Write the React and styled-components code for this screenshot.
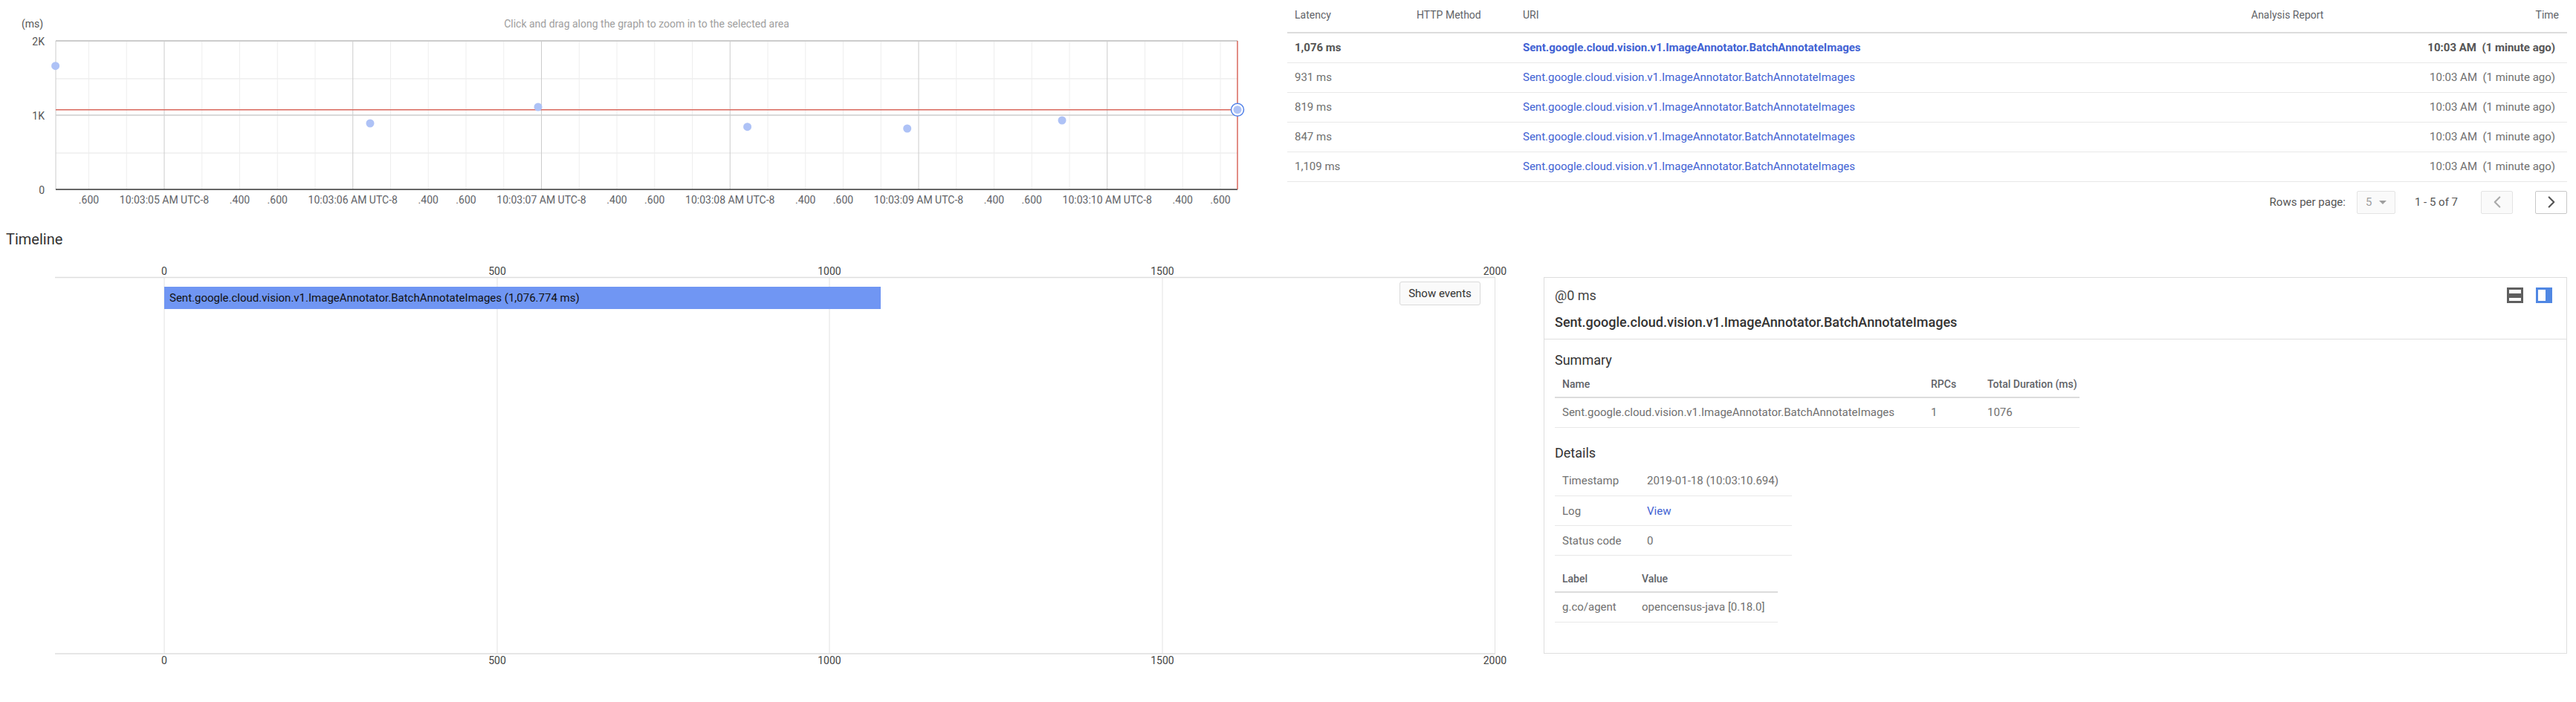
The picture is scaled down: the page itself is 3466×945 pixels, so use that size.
import styled, { createGlobalStyle } from "styled-components";
import { ChevronLeft, ChevronRight } from "lucide-react";

const GlobalStyle = createGlobalStyle`
  html, body {
    margin: 0;
    background: #fff;
    font-family: Roboto, "Liberation Sans", sans-serif;
  }
`;

const Page = styled.div`
  width: 3466px;
  height: 945px;
  overflow: hidden;
  color: #616161;
`;

const TopRow = styled.div`
  display: flex;
  height: 300px;
`;

const ChartPanel = styled.div`
  width: 1732px;
  flex: none;
`;

const ChartHeader = styled.div`
  display: grid;
  grid-template-columns: 75px 1590px;
  height: 48px;
  padding-top: 22px;
  box-sizing: border-box;
  font-size: 14px;
  line-height: 20px;
`;

const AxisUnit = styled.span`
  padding-left: 29px;
  color: #555;
`;

const Hint = styled.span`
  text-align: center;
  color: #9e9e9e;
`;

const TablePanel = styled.div`
  width: 1722px;
  flex: none;
`;

const TraceTable = styled.table`
  width: 100%;
  table-layout: fixed;
  border-collapse: collapse;
  font-size: 15px;
`;

const Th = styled.th`
  height: 44px;
  box-sizing: border-box;
  padding: 0 ${(p) => (p.$last ? "11px" : "10px")} 4px 10px;
  font-size: 14px;
  font-weight: 400;
  color: #5f6368;
  text-align: ${(p) => (p.$right ? "right" : "left")};
  border-bottom: 2px solid #dcdcdc;
`;

const Td = styled.td`
  height: 40px;
  box-sizing: border-box;
  padding: 0 ${(p) => (p.$right ? "16px" : "10px")} 0 10px;
  text-align: ${(p) => (p.$right ? "right" : "left")};
  white-space: pre;
  font-weight: ${(p) => (p.$bold ? 700 : 400)};
  color: ${(p) => (p.$bold ? "#555" : "#707070")};
  border-bottom: 1px solid #e8e8e8;
`;

const UriLink = styled.a`
  color: #3f62d3;
  text-decoration: none;
`;

const Pagination = styled.div`
  display: flex;
  align-items: center;
  justify-content: flex-end;
  margin-top: 12px;
  height: 31px;
  font-size: 15px;
  color: #555;
`;

const RowsSelect = styled.div`
  display: flex;
  align-items: center;
  justify-content: space-between;
  box-sizing: border-box;
  width: 52px;
  height: 31px;
  margin-left: 15px;
  padding: 0 11px;
  background: #fafafa;
  border: 1px solid #e4e4e4;
  border-radius: 2px;
  color: #9e9e9e;
`;

const Caret = styled.span`
  width: 0;
  height: 0;
  border-left: 5px solid transparent;
  border-right: 5px solid transparent;
  border-top: 5px solid #9e9e9e;
`;

const PageCount = styled.span`
  margin-left: 26px;
  margin-right: 31px;
`;

const PageButton = styled.button`
  display: flex;
  align-items: center;
  justify-content: center;
  box-sizing: border-box;
  width: 43px;
  height: 31px;
  margin-left: ${(p) => (p.$next ? "30px" : "0")};
  padding: 0;
  background: ${(p) => (p.$next ? "#fff" : "#fafafa")};
  border: 1px solid ${(p) => (p.$next ? "#c8c8c8" : "#e4e4e4")};
  border-radius: 2px;
  color: ${(p) => (p.$next ? "#555" : "#aaa")};
`;

const TimelineHeading = styled.h2`
  margin: 0;
  height: 73px;
  padding: 10px 0 0 8px;
  box-sizing: border-box;
  font-size: 20px;
  line-height: 24px;
  font-weight: 400;
  color: #333;
`;

const TimelineRow = styled.div`
  display: flex;
`;

const TimelineChart = styled.div`
  position: relative;
  width: 2077px;
  flex: none;
`;

const ShowEvents = styled.button`
  position: absolute;
  left: 1883px;
  top: 6px;
  width: 109px;
  height: 32px;
  padding: 0;
  background: #fafafa;
  border: 1px solid #dadada;
  border-radius: 3px;
  font-family: inherit;
  font-size: 15px;
  color: #333;
`;

const DetailPanel = styled.div`
  box-sizing: border-box;
  width: 1377px;
  height: 507px;
  flex: none;
  border: 1px solid #dedede;
`;

const DetailHeader = styled.div`
  position: relative;
  height: 83px;
  box-sizing: border-box;
  padding: 13px 14px 0;
  border-bottom: 1px solid #dedede;
`;

const Offset = styled.div`
  font-size: 18px;
  line-height: 22px;
  color: #444;
`;

const SpanTitle = styled.div`
  margin-top: 14px;
  font-size: 18px;
  line-height: 22px;
  font-weight: 500;
  color: #333;
`;

const ViewIcons = styled.div`
  position: absolute;
  top: 13px;
  right: 19px;
  display: flex;
  gap: 17px;
`;

const DetailBody = styled.div`
  padding: 17px 14px 0;
`;

const SectionTitle = styled.h3`
  margin: 0;
  font-size: 18px;
  line-height: 22px;
  font-weight: 400;
  color: #333;
`;

const InfoTable = styled.table`
  width: ${(p) => p.$width}px;
  margin-top: ${(p) => p.$top}px;
  table-layout: fixed;
  border-collapse: collapse;
  font-size: 15px;
`;

const InfoTh = styled.th`
  height: ${(p) => p.$height || 35}px;
  box-sizing: border-box;
  padding: 0 0 0 10px;
  text-align: left;
  font-size: 14px;
  font-weight: 500;
  color: #5f6368;
  border-bottom: 2px solid #dcdcdc;
`;

const InfoTd = styled.td`
  height: 40px;
  box-sizing: border-box;
  padding: 0 0 0 10px;
  white-space: nowrap;
  color: #707070;
  border-bottom: 1px solid #e8e8e8;
`;

const rows = [
  { latency: "1,076 ms", bold: true },
  { latency: "931 ms" },
  { latency: "819 ms" },
  { latency: "847 ms" },
  { latency: "1,109 ms" },
];

const URI = "Sent.google.cloud.vision.v1.ImageAnnotator.BatchAnnotateImages";

// latency chart ticks, in page coordinates
const STEP = 50.75;
const FIRST_TICK = 221 - 2 * STEP;
const tickLabels = [".600", null, "10:03:05 AM UTC-8", null, ".400", ".600", null, "10:03:06 AM UTC-8", null, ".400", ".600", null, "10:03:07 AM UTC-8", null, ".400", ".600", null, "10:03:08 AM UTC-8", null, ".400", ".600", null, "10:03:09 AM UTC-8", null, ".400", ".600", null, "10:03:10 AM UTC-8", null, ".400", ".600"];
const points = [
  [74.6, 88.7],
  [498, 166],
  [724, 144],
  [1005.6, 170.7],
  [1220.7, 173],
  [1429, 162],
];

const LatencyChart = () => (
  <svg width="1732" height="252" viewBox="0 48 1732 252" style={{ display: "block" }}>
    <g stroke="#eeeeee" strokeWidth="1.5">
      <line x1="75" x2="1665" y1="106" y2="106" />
      <line x1="75" x2="1665" y1="206" y2="206" />
    </g>
    {tickLabels.map((label, i) => {
      const x = FIRST_TICK + i * STEP;
      const major = label && label.startsWith("10");
      return (
        <g key={i}>
          <line x1={x} x2={x} y1="55" y2="255" stroke={major ? "#cccccc" : "#eeeeee"} strokeWidth="1" />
          {label && (
            <text x={x} y="274" textAnchor="middle" fontSize="14" fill="#5f6368" fontFamily="Roboto, sans-serif">
              {label}
            </text>
          )}
        </g>
      );
    })}
    <line x1="75" x2="1665" y1="55" y2="55" stroke="#cccccc" strokeWidth="2" />
    <line x1="75" x2="1665" y1="155" y2="155" stroke="#cccccc" strokeWidth="1.5" />
    <line x1="75" x2="75" y1="55" y2="255" stroke="#cccccc" strokeWidth="1" />
    <line x1="75" x2="1665" y1="255" y2="255" stroke="#333333" strokeWidth="1.5" />
    <line x1="75" x2="1665" y1="147.7" y2="147.7" stroke="#d9675c" strokeWidth="1.5" />
    <line x1="1665" x2="1665" y1="55" y2="255" stroke="#d9675c" strokeWidth="1.5" />
    {[["2K", 61], ["1K", 161], ["0", 261]].map(([label, y]) => (
      <text key={label} x="60" y={y} textAnchor="end" fontSize="14" fill="#555" fontFamily="Roboto, sans-serif">
        {label}
      </text>
    ))}
    {points.map(([x, y]) => (
      <circle key={x} cx={x} cy={y} r="5.5" fill="#aec2f6" />
    ))}
    <circle cx="1665" cy="147.7" r="8.5" fill="#fff" stroke="#4f7fe8" strokeWidth="1.5" />
    <circle cx="1665" cy="147.7" r="5.5" fill="#aec2f6" />
  </svg>
);

const timelineTicks = [
  [221, "0"],
  [669, "500"],
  [1116, "1000"],
  [1564, "1500"],
  [2011.5, "2000"],
];

const SpanTimeline = () => (
  <svg width="2077" height="534" viewBox="0 373 2077 534" overflow="visible" style={{ display: "block" }}>
    {timelineTicks.map(([x, label]) => (
      <g key={label}>
        <line x1={x} x2={x} y1="373" y2="880" stroke="#e2e2e2" strokeWidth="1" />
        <text x={x} y="371" dy="-1" textAnchor="middle" fontSize="14" fill="#444" fontFamily="Roboto, sans-serif">
          {label}
        </text>
        <text x={x} y="894" textAnchor="middle" fontSize="14" fill="#444" fontFamily="Roboto, sans-serif">
          {label}
        </text>
      </g>
    ))}
    <line x1="74" x2="2012" y1="373.5" y2="373.5" stroke="#dedede" strokeWidth="1.5" />
    <line x1="74" x2="2012" y1="880" y2="880" stroke="#dedede" strokeWidth="1.5" />
    <rect x="221" y="386" width="964" height="30" fill="#7096f3" />
    <text x="228" y="406" fontSize="15" fill="#111" fontFamily="Roboto, sans-serif">
      {URI} (1,076.774 ms)
    </text>
  </svg>
);

const StackedViewIcon = () => (
  <svg width="22" height="21" viewBox="0 0 22 21">
    <path fill="#5f5f5f" fillRule="evenodd" d="M0 0h22v21H0zM3 3v5h16V3zM3 14v4h16v-4z" />
  </svg>
);

const SplitViewIcon = () => (
  <svg width="22" height="21" viewBox="0 0 22 21">
    <path fill="#5087e3" fillRule="evenodd" d="M0 0h22v21H0zM3 3v15h10V3z" />
  </svg>
);

export default function App() {
  return (
    <Page>
      <GlobalStyle />
      <TopRow>
        <ChartPanel>
          <ChartHeader>
            <AxisUnit>(ms)</AxisUnit>
            <Hint>Click and drag along the graph to zoom in to the selected area</Hint>
          </ChartHeader>
          <LatencyChart />
        </ChartPanel>
        <TablePanel>
          <TraceTable>
            <colgroup>
              <col style={{ width: 164 }} />
              <col style={{ width: 143 }} />
              <col />
              <col style={{ width: 200 }} />
              <col style={{ width: 235 }} />
            </colgroup>
            <thead>
              <tr>
                <Th>Latency</Th>
                <Th>HTTP Method</Th>
                <Th>URI</Th>
                <Th>Analysis Report</Th>
                <Th $right $last>Time</Th>
              </tr>
            </thead>
            <tbody>
              {rows.map((row) => (
                <tr key={row.latency}>
                  <Td $bold={row.bold}>{row.latency}</Td>
                  <Td />
                  <Td $bold={row.bold}>
                    <UriLink href="#">{URI}</UriLink>
                  </Td>
                  <Td />
                  <Td $right $bold={row.bold}>{"10:03 AM  (1 minute ago)"}</Td>
                </tr>
              ))}
            </tbody>
          </TraceTable>
          <Pagination>
            <span>Rows per page:</span>
            <RowsSelect>
              5
              <Caret />
            </RowsSelect>
            <PageCount>1 - 5 of 7</PageCount>
            <PageButton>
              <ChevronLeft size={26} strokeWidth={2} />
            </PageButton>
            <PageButton $next>
              <ChevronRight size={26} strokeWidth={2} />
            </PageButton>
          </Pagination>
        </TablePanel>
      </TopRow>
      <TimelineHeading>Timeline</TimelineHeading>
      <TimelineRow>
        <TimelineChart>
          <SpanTimeline />
          <ShowEvents>Show events</ShowEvents>
        </TimelineChart>
        <DetailPanel>
          <DetailHeader>
            <Offset>@0 ms</Offset>
            <SpanTitle>{URI}</SpanTitle>
            <ViewIcons>
              <StackedViewIcon />
              <SplitViewIcon />
            </ViewIcons>
          </DetailHeader>
          <DetailBody>
            <SectionTitle>Summary</SectionTitle>
            <InfoTable $width={706} $top={4}>
              <colgroup>
                <col style={{ width: 496 }} />
                <col style={{ width: 76 }} />
                <col />
              </colgroup>
              <thead>
                <tr>
                  <InfoTh>Name</InfoTh>
                  <InfoTh>RPCs</InfoTh>
                  <InfoTh>Total Duration (ms)</InfoTh>
                </tr>
              </thead>
              <tbody>
                <tr>
                  <InfoTd>{URI}</InfoTd>
                  <InfoTd>1</InfoTd>
                  <InfoTd>1076</InfoTd>
                </tr>
              </tbody>
            </InfoTable>
            <SectionTitle style={{ marginTop: 23 }}>Details</SectionTitle>
            <InfoTable $width={319} $top={7}>
              <colgroup>
                <col style={{ width: 114 }} />
                <col />
              </colgroup>
              <tbody>
                <tr>
                  <InfoTd>Timestamp</InfoTd>
                  <InfoTd>2019-01-18 (10:03:10.694)</InfoTd>
                </tr>
                <tr>
                  <InfoTd>Log</InfoTd>
                  <InfoTd>
                    <UriLink href="#">View</UriLink>
                  </InfoTd>
                </tr>
                <tr>
                  <InfoTd>Status code</InfoTd>
                  <InfoTd>0</InfoTd>
                </tr>
              </tbody>
            </InfoTable>
            <InfoTable $width={300} $top={14}>
              <colgroup>
                <col style={{ width: 107 }} />
                <col />
              </colgroup>
              <thead>
                <tr>
                  <InfoTh>Label</InfoTh>
                  <InfoTh>Value</InfoTh>
                </tr>
              </thead>
              <tbody>
                <tr>
                  <InfoTd>g.co/agent</InfoTd>
                  <InfoTd>opencensus-java [0.18.0]</InfoTd>
                </tr>
              </tbody>
            </InfoTable>
          </DetailBody>
        </DetailPanel>
      </TimelineRow>
    </Page>
  );
}
